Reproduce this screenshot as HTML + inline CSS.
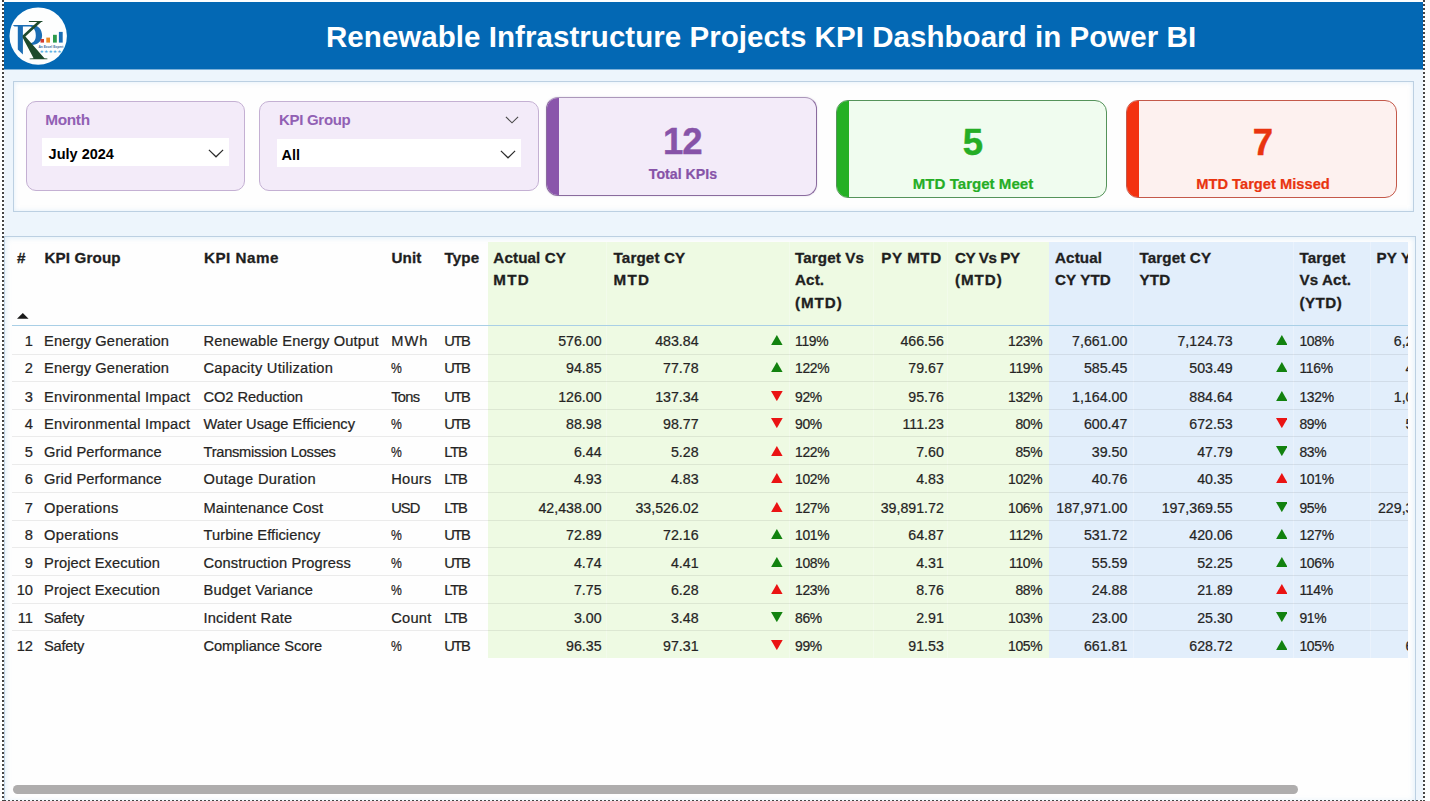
<!DOCTYPE html>
<html lang="en">
<head>
<meta charset="utf-8">
<title>Renewable Infrastructure Projects KPI Dashboard in Power BI</title>
<style>
*{box-sizing:border-box;margin:0;padding:0}
html,body{width:1430px;height:801px;overflow:hidden;background:#fdfefe}
body{position:relative;font-family:"Liberation Sans",Arial,sans-serif;color:#1c1b1a}
.abs{position:absolute}
#canvas{left:4px;top:2px;width:1419px;height:798px;background:#edf5fc}
#dotL{left:2px;top:0;width:2px;height:801px;background:repeating-linear-gradient(to bottom,#454545 0,#454545 2px,transparent 2px,transparent 4px)}
#dotR{left:1423px;top:0;width:2px;height:801px;background:repeating-linear-gradient(to bottom,#454545 0,#454545 2px,transparent 2px,transparent 4px)}
#dotB{z-index:5;left:4px;top:800px;width:1421px;height:2px;background:repeating-linear-gradient(to right,#454545 0,#454545 2px,transparent 2px,transparent 4px)}
#hdr{left:4px;top:2px;width:1419px;height:68px;background:#0368b4;border-bottom:1px solid #7db1d9}
#title{left:326px;top:19px;white-space:nowrap;font-weight:bold;font-size:29.5px;line-height:36px;color:#fff;letter-spacing:0.05px}
#logo{left:9px;top:7px}
#filters{left:13px;top:81px;width:1401px;height:131px;background:#fefefe;border:1px solid #bcd0e2;box-shadow:inset 0 0 5px rgba(170,210,240,.35)}
.slicer{background:#f3ebf9;border:1px solid #c4b0d3;border-radius:10px}
.slbl{font-weight:bold;color:#9160b4;white-space:nowrap}
.sbox{background:#fff}
.sval{font-weight:bold;color:#000;white-space:nowrap;font-size:14.5px;line-height:18px}
.card{border-radius:12px;overflow:hidden}
.card .bar{position:absolute;left:0;top:0;bottom:0;width:12px}
.card .num{position:absolute;left:0;right:0;text-align:center;font-weight:bold;white-space:nowrap;-webkit-text-stroke:.45px currentColor}
.card .lbl{position:absolute;left:0;right:0;text-align:center;font-weight:bold;white-space:nowrap;-webkit-text-stroke:.2px currentColor}
#tpanel{left:4px;top:236px;width:1412px;height:566px;background:#fefefe;border:1px solid #bcd0e2;border-bottom:none;box-shadow:inset 0 0 6px rgba(170,210,240,.45)}
#tclip{left:12px;top:238px;width:1396px;height:545px;overflow:hidden}
#tin{position:absolute;left:-12px;top:-238px;width:1430px;height:801px}
.band{position:absolute;top:242px;height:415.7px}
.vs{position:absolute;top:242px;height:415.7px;width:1px;background:rgba(255,255,255,.28)}
.hline{position:absolute;left:12px;width:1396px;top:325px;height:1px;background:#a9cfe6}
.rl{position:absolute;left:12px;width:1396px;height:1px;background:rgba(0,0,0,.075)}
.h{position:absolute;top:246.5px;font-weight:bold;font-size:15.2px;line-height:22.5px;white-space:nowrap;color:#1f1f1f;letter-spacing:.12px;-webkit-text-stroke:.3px #1f1f1f}
.row{position:absolute;left:0;width:1430px;height:27.64px}
.c{position:absolute;top:0;white-space:nowrap;font-size:14.67px;line-height:27.64px;color:#252423;-webkit-text-stroke:.22px #252423}
.c.n{font-size:14.2px}
.c.p{font-size:13.9px;letter-spacing:-.3px}
.c.r{text-align:right}
.c.pc{transform:scaleX(.83);transform-origin:0 50%}
.tri{position:absolute;top:7.3px}
.tri.d{top:7px}
#sbar{left:13px;top:785px;width:1284.5px;height:9px;border-radius:4.5px;background:#afadad}
</style>
</head>
<body>
<div id="canvas" class="abs"></div>
<div id="dotL" class="abs"></div>
<div id="dotR" class="abs"></div>
<div id="dotB" class="abs"></div>

<div id="hdr" class="abs"></div>
<svg id="logo" class="abs" width="60" height="60" viewBox="0 0 60 60">
  <circle cx="29.2" cy="29.1" r="28.7" fill="#fdfefe"/>
  <!-- P (blue) -->
  <path d="M3.7 18.3 L6 18 L22.4 18 C29.6 18 33.1 22.6 33.1 28.6 C33.1 34.4 28.6 37.9 22.6 37.9 L20.6 37.7 L20.6 36 C24.4 36.2 26.8 33.2 26.8 28.4 C26.8 23.4 24.6 19.9 20.8 19.6 L13.9 19.6 L13.9 47.4 L8.8 42.6 L8.8 19.6 L5.6 19.4 Z" fill="#1a6db4"/>
  <!-- K (dark green) -->
  <path d="M19.9 14.1 L33.4 14.1 L33.4 15 L32.2 15.1 L16.4 29.6 L35.4 51.3 L38.4 51.5 L38.4 52.2 L20.7 52.2 L20.7 51.5 L24.6 51.3 L13.6 30.6 L13.6 28.6 L28.2 15.1 L19.9 15 Z" fill="#1d4a2c"/>
  <rect x="31.5" y="32" width="3.5" height="3.6" fill="#d43a2e"/>
  <rect x="37.3" y="30.6" width="3.7" height="5" fill="#ec8a22"/>
  <rect x="44" y="27.8" width="3.8" height="7.8" fill="#2c9a4b"/>
  <rect x="49.9" y="24.9" width="3.8" height="10.7" fill="#1a6db4"/>
  <text x="29.4" y="41.2" font-family="Liberation Sans, Arial, sans-serif" font-size="3.4" font-weight="bold" fill="#3a6c9c" textLength="25" lengthAdjust="spacingAndGlyphs">An Excel Expert</text>
  <text x="30.6" y="45.8" font-family="DejaVu Sans, sans-serif" font-size="4.4" fill="#5aaee2" textLength="22" lengthAdjust="spacingAndGlyphs">★★★★★</text>
</svg>
<div id="title" class="abs">Renewable Infrastructure Projects KPI Dashboard in Power BI</div>

<div id="filters" class="abs"></div>

<!-- Month slicer -->
<div class="abs slicer" style="left:26px;top:100.5px;width:219px;height:90.5px"></div>
<div class="abs slbl" style="left:45.3px;top:111px;font-size:15.4px;line-height:18px;letter-spacing:-.35px">Month</div>
<div class="abs sbox" style="left:42px;top:138px;width:187px;height:28px"></div>
<div class="abs sval" style="left:48.6px;top:144.6px">July 2024</div>
<svg class="abs" style="left:208px;top:149.3px" width="16" height="9" viewBox="0 0 16 9"><polyline points="0.9,0.9 8,7.8 15.1,0.9" fill="none" stroke="#2b2b2b" stroke-width="1.2"/></svg>

<!-- KPI Group slicer -->
<div class="abs slicer" style="left:259px;top:100.5px;width:279.5px;height:90.5px"></div>
<div class="abs slbl" style="left:279px;top:110.5px;font-size:15px;line-height:18px;letter-spacing:-.3px">KPI Group</div>
<svg class="abs" style="left:505px;top:116px" width="14" height="8" viewBox="0 0 14 8"><polyline points="0.9,0.9 7,6.8 13.1,0.9" fill="none" stroke="#4a4a4a" stroke-width="1.1"/></svg>
<div class="abs sbox" style="left:276.5px;top:139px;width:244.8px;height:28px"></div>
<div class="abs sval" style="left:281.6px;top:145.6px">All</div>
<svg class="abs" style="left:500px;top:150.2px" width="16" height="9" viewBox="0 0 16 9"><polyline points="0.9,0.9 8,7.8 15.1,0.9" fill="none" stroke="#2b2b2b" stroke-width="1.2"/></svg>

<!-- Cards -->
<div class="abs card" style="left:546px;top:97px;width:271px;height:98.5px;background:#f3ebf9;border:1px solid #8a6b9e;border-top-color:#ab97ba;box-shadow:0 0 2px rgba(120,90,150,.25)">
  <div class="bar" style="background:#8a55ab"></div>
  <div class="num" style="top:24.1px;font-size:36.5px;line-height:40px;color:#8753a8;left:1.6px;letter-spacing:-1px">12</div>
  <div class="lbl" style="top:66.5px;font-size:14.2px;line-height:18px;color:#8753a8;left:3px">Total KPIs</div>
</div>
<div class="abs card" style="left:836px;top:100px;width:271px;height:97.5px;background:#f0fcef;border:1px solid #55935a">
  <div class="bar" style="background:#25b025"></div>
  <div class="num" style="top:22.1px;font-size:36.5px;line-height:40px;color:#25ad25;left:3px">5</div>
  <div class="lbl" style="top:73.5px;font-size:15.1px;line-height:18px;color:#25ad25;left:3px">MTD Target Meet</div>
</div>
<div class="abs card" style="left:1126px;top:100px;width:271px;height:97.5px;background:#fdf1ef;border:1px solid #c4594a">
  <div class="bar" style="background:#f33210"></div>
  <div class="num" style="top:22.1px;font-size:36.5px;line-height:40px;color:#e9340f;left:3px">7</div>
  <div class="lbl" style="top:73.5px;font-size:14.7px;line-height:18px;color:#e9340f;left:3px">MTD Target Missed</div>
</div>

<!-- Table -->
<div id="tpanel" class="abs"></div>
<div id="tclip" class="abs"><div id="tin">
  <div class="band" style="left:488px;width:561px;background:#eefae3"></div>
  <div class="band" style="left:1049px;width:360px;background:#e2eefb"></div>

  <div class="vs" style="left:606px"></div><div class="vs" style="left:789px"></div><div class="vs" style="left:873px"></div><div class="vs" style="left:947px"></div><div class="vs" style="left:1133px"></div><div class="vs" style="left:1293px"></div><div class="vs" style="left:1370px"></div>
  <div class="h" style="left:17px">#</div>
  <div class="h" style="left:44.5px">KPI Group</div>
  <div class="h" style="left:204px;letter-spacing:.5px">KPI Name</div>
  <div class="h" style="left:391.5px">Unit</div>
  <div class="h" style="left:444.5px">Type</div>
  <div class="h" style="left:493.3px">Actual CY<br><span style="letter-spacing:1.2px">MTD</span></div>
  <div class="h" style="left:613.6px">Target CY<br><span style="letter-spacing:1.2px">MTD</span></div>
  <div class="h" style="left:795px">Target Vs<br>Act.<br><span style="letter-spacing:.95px">(MTD)</span></div>
  <div class="h" style="left:881.3px;letter-spacing:.55px">PY MTD</div>
  <div class="h" style="left:955px"><span style="letter-spacing:-.42px">CY Vs PY</span><br><span style="letter-spacing:.95px">(MTD)</span></div>
  <div class="h" style="left:1055px">Actual<br>CY YTD</div>
  <div class="h" style="left:1139.5px">Target CY<br>YTD</div>
  <div class="h" style="left:1299.4px">Target<br>Vs Act.<br><span style="letter-spacing:.5px">(YTD)</span></div>
  <div class="h" style="left:1376.6px">PY YTD</div>
  <svg class="abs" style="left:17.2px;top:313.4px" width="11.6" height="5.8" viewBox="0 0 11.6 5.8"><polygon points="0,5.8 5.8,0 11.6,5.8" fill="#1a1a1a"/></svg>

  <div class="hline"></div>
<div class="row" style="top:328.00px"><span class="c r" style="right:1397px">1</span><span class="c" style="left:44px;letter-spacing:0.12px">Energy Generation</span><span class="c" style="left:203.5px;letter-spacing:0.14px">Renewable Energy Output</span><span class="c" style="left:391.2px;letter-spacing:1.0px">MWh</span><span class="c" style="left:444.3px;letter-spacing:-1.4px">UTB</span><span class="c r n" style="right:828.4px">576.00</span><span class="c r n" style="right:731.4px">483.84</span><svg class="tri" style="left:771.15px" width="11.7" height="10.2" viewBox="0 0 11.7 10.2"><polygon points="0,10.2 5.85,0 11.7,10.2" fill="#12820f"/></svg><span class="c n p" style="left:795px">119%</span><span class="c r n" style="right:486.20000000000005px">466.56</span><span class="c r n p" style="right:387.70000000000005px">123%</span><span class="c r n" style="right:302.70000000000005px">7,661.00</span><span class="c r n" style="right:197.29999999999995px">7,124.73</span><svg class="tri" style="left:1275.55px" width="11.7" height="10.2" viewBox="0 0 11.7 10.2"><polygon points="0,10.2 5.85,0 11.7,10.2" fill="#12820f"/></svg><span class="c n p" style="left:1299.4px">108%</span><span class="c r n" style="right:-19px">6,228.46</span></div>
<div class="row" style="top:355.00px"><span class="c r" style="right:1397px">2</span><span class="c" style="left:44px;letter-spacing:0.12px">Energy Generation</span><span class="c" style="left:203.5px;letter-spacing:0.25px">Capacity Utilization</span><span class="c pc" style="left:391.2px">%</span><span class="c" style="left:444.3px;letter-spacing:-1.4px">UTB</span><span class="c r n" style="right:828.4px">94.85</span><span class="c r n" style="right:731.4px">77.78</span><svg class="tri" style="left:771.15px" width="11.7" height="10.2" viewBox="0 0 11.7 10.2"><polygon points="0,10.2 5.85,0 11.7,10.2" fill="#12820f"/></svg><span class="c n p" style="left:795px">122%</span><span class="c r n" style="right:486.20000000000005px">79.67</span><span class="c r n p" style="right:387.70000000000005px">119%</span><span class="c r n" style="right:302.70000000000005px">585.45</span><span class="c r n" style="right:197.29999999999995px">503.49</span><svg class="tri" style="left:1275.55px" width="11.7" height="10.2" viewBox="0 0 11.7 10.2"><polygon points="0,10.2 5.85,0 11.7,10.2" fill="#12820f"/></svg><span class="c n p" style="left:1299.4px">116%</span><span class="c r n" style="right:-19px">491.97</span></div>
<div class="row" style="top:384.00px"><span class="c r" style="right:1397px">3</span><span class="c" style="left:44px;letter-spacing:0.23px">Environmental Impact</span><span class="c" style="left:203.5px;letter-spacing:-0.06px">CO2 Reduction</span><span class="c" style="left:391.2px;letter-spacing:-0.7px">Tons</span><span class="c" style="left:444.3px;letter-spacing:-1.4px">UTB</span><span class="c r n" style="right:828.4px">126.00</span><span class="c r n" style="right:731.4px">137.34</span><svg class="tri d" style="left:771.15px" width="11.7" height="10.2" viewBox="0 0 11.7 10.2"><polygon points="0,0 11.7,0 5.85,10.2" fill="#ea1313"/></svg><span class="c n p" style="left:795px">92%</span><span class="c r n" style="right:486.20000000000005px">95.76</span><span class="c r n p" style="right:387.70000000000005px">132%</span><span class="c r n" style="right:302.70000000000005px">1,164.00</span><span class="c r n" style="right:197.29999999999995px">884.64</span><svg class="tri" style="left:1275.55px" width="11.7" height="10.2" viewBox="0 0 11.7 10.2"><polygon points="0,10.2 5.85,0 11.7,10.2" fill="#12820f"/></svg><span class="c n p" style="left:1299.4px">132%</span><span class="c r n" style="right:-19px">1,024.32</span></div>
<div class="row" style="top:411.00px"><span class="c r" style="right:1397px">4</span><span class="c" style="left:44px;letter-spacing:0.23px">Environmental Impact</span><span class="c" style="left:203.5px">Water Usage Efficiency</span><span class="c pc" style="left:391.2px">%</span><span class="c" style="left:444.3px;letter-spacing:-1.4px">UTB</span><span class="c r n" style="right:828.4px">88.98</span><span class="c r n" style="right:731.4px">98.77</span><svg class="tri d" style="left:771.15px" width="11.7" height="10.2" viewBox="0 0 11.7 10.2"><polygon points="0,0 11.7,0 5.85,10.2" fill="#ea1313"/></svg><span class="c n p" style="left:795px">90%</span><span class="c r n" style="right:486.20000000000005px">111.23</span><span class="c r n p" style="right:387.70000000000005px">80%</span><span class="c r n" style="right:302.70000000000005px">600.47</span><span class="c r n" style="right:197.29999999999995px">672.53</span><svg class="tri d" style="left:1275.55px" width="11.7" height="10.2" viewBox="0 0 11.7 10.2"><polygon points="0,0 11.7,0 5.85,10.2" fill="#ea1313"/></svg><span class="c n p" style="left:1299.4px">89%</span><span class="c r n" style="right:-19px">582.46</span></div>
<div class="row" style="top:439.00px"><span class="c r" style="right:1397px">5</span><span class="c" style="left:44px;letter-spacing:0.13px">Grid Performance</span><span class="c" style="left:203.5px;letter-spacing:-0.26px">Transmission Losses</span><span class="c pc" style="left:391.2px">%</span><span class="c" style="left:444.3px;letter-spacing:-1.2px">LTB</span><span class="c r n" style="right:828.4px">6.44</span><span class="c r n" style="right:731.4px">5.28</span><svg class="tri" style="left:771.15px" width="11.7" height="10.2" viewBox="0 0 11.7 10.2"><polygon points="0,10.2 5.85,0 11.7,10.2" fill="#ea1313"/></svg><span class="c n p" style="left:795px">122%</span><span class="c r n" style="right:486.20000000000005px">7.60</span><span class="c r n p" style="right:387.70000000000005px">85%</span><span class="c r n" style="right:302.70000000000005px">39.50</span><span class="c r n" style="right:197.29999999999995px">47.79</span><svg class="tri d" style="left:1275.55px" width="11.7" height="10.2" viewBox="0 0 11.7 10.2"><polygon points="0,0 11.7,0 5.85,10.2" fill="#12820f"/></svg><span class="c n p" style="left:1299.4px">83%</span><span class="c r n" style="right:-19px">41.48</span></div>
<div class="row" style="top:466.00px"><span class="c r" style="right:1397px">6</span><span class="c" style="left:44px;letter-spacing:0.13px">Grid Performance</span><span class="c" style="left:203.5px;letter-spacing:0.33px">Outage Duration</span><span class="c" style="left:391.2px;letter-spacing:0.25px">Hours</span><span class="c" style="left:444.3px;letter-spacing:-1.2px">LTB</span><span class="c r n" style="right:828.4px">4.93</span><span class="c r n" style="right:731.4px">4.83</span><svg class="tri" style="left:771.15px" width="11.7" height="10.2" viewBox="0 0 11.7 10.2"><polygon points="0,10.2 5.85,0 11.7,10.2" fill="#ea1313"/></svg><span class="c n p" style="left:795px">102%</span><span class="c r n" style="right:486.20000000000005px">4.83</span><span class="c r n p" style="right:387.70000000000005px">102%</span><span class="c r n" style="right:302.70000000000005px">40.76</span><span class="c r n" style="right:197.29999999999995px">40.35</span><svg class="tri" style="left:1275.55px" width="11.7" height="10.2" viewBox="0 0 11.7 10.2"><polygon points="0,10.2 5.85,0 11.7,10.2" fill="#ea1313"/></svg><span class="c n p" style="left:1299.4px">101%</span><span class="c r n" style="right:-19px">42.39</span></div>
<div class="row" style="top:495.00px"><span class="c r" style="right:1397px">7</span><span class="c" style="left:44px;letter-spacing:0.29px">Operations</span><span class="c" style="left:203.5px;letter-spacing:0.09px">Maintenance Cost</span><span class="c" style="left:391.2px;letter-spacing:-0.9px">USD</span><span class="c" style="left:444.3px;letter-spacing:-1.2px">LTB</span><span class="c r n" style="right:828.4px">42,438.00</span><span class="c r n" style="right:731.4px">33,526.02</span><svg class="tri" style="left:771.15px" width="11.7" height="10.2" viewBox="0 0 11.7 10.2"><polygon points="0,10.2 5.85,0 11.7,10.2" fill="#ea1313"/></svg><span class="c n p" style="left:795px">127%</span><span class="c r n" style="right:486.20000000000005px">39,891.72</span><span class="c r n p" style="right:387.70000000000005px">106%</span><span class="c r n" style="right:302.70000000000005px">187,971.00</span><span class="c r n" style="right:197.29999999999995px">197,369.55</span><svg class="tri d" style="left:1275.55px" width="11.7" height="10.2" viewBox="0 0 11.7 10.2"><polygon points="0,0 11.7,0 5.85,10.2" fill="#12820f"/></svg><span class="c n p" style="left:1299.4px">95%</span><span class="c r n" style="right:-19px">229,372.56</span></div>
<div class="row" style="top:522.00px"><span class="c r" style="right:1397px">8</span><span class="c" style="left:44px;letter-spacing:0.29px">Operations</span><span class="c" style="left:203.5px;letter-spacing:0.07px">Turbine Efficiency</span><span class="c pc" style="left:391.2px">%</span><span class="c" style="left:444.3px;letter-spacing:-1.4px">UTB</span><span class="c r n" style="right:828.4px">72.89</span><span class="c r n" style="right:731.4px">72.16</span><svg class="tri" style="left:771.15px" width="11.7" height="10.2" viewBox="0 0 11.7 10.2"><polygon points="0,10.2 5.85,0 11.7,10.2" fill="#12820f"/></svg><span class="c n p" style="left:795px">101%</span><span class="c r n" style="right:486.20000000000005px">64.87</span><span class="c r n p" style="right:387.70000000000005px">112%</span><span class="c r n" style="right:302.70000000000005px">531.72</span><span class="c r n" style="right:197.29999999999995px">420.06</span><svg class="tri" style="left:1275.55px" width="11.7" height="10.2" viewBox="0 0 11.7 10.2"><polygon points="0,10.2 5.85,0 11.7,10.2" fill="#12820f"/></svg><span class="c n p" style="left:1299.4px">127%</span><span class="c r n" style="right:-19px">47.51</span></div>
<div class="row" style="top:550.00px"><span class="c r" style="right:1397px">9</span><span class="c" style="left:44px;letter-spacing:0.12px">Project Execution</span><span class="c" style="left:203.5px;letter-spacing:0.12px">Construction Progress</span><span class="c pc" style="left:391.2px">%</span><span class="c" style="left:444.3px;letter-spacing:-1.4px">UTB</span><span class="c r n" style="right:828.4px">4.74</span><span class="c r n" style="right:731.4px">4.41</span><svg class="tri" style="left:771.15px" width="11.7" height="10.2" viewBox="0 0 11.7 10.2"><polygon points="0,10.2 5.85,0 11.7,10.2" fill="#12820f"/></svg><span class="c n p" style="left:795px">108%</span><span class="c r n" style="right:486.20000000000005px">4.31</span><span class="c r n p" style="right:387.70000000000005px">110%</span><span class="c r n" style="right:302.70000000000005px">55.59</span><span class="c r n" style="right:197.29999999999995px">52.25</span><svg class="tri" style="left:1275.55px" width="11.7" height="10.2" viewBox="0 0 11.7 10.2"><polygon points="0,10.2 5.85,0 11.7,10.2" fill="#12820f"/></svg><span class="c n p" style="left:1299.4px">106%</span><span class="c r n" style="right:-19px">51.33</span></div>
<div class="row" style="top:577.00px"><span class="c r" style="right:1397px">10</span><span class="c" style="left:44px;letter-spacing:0.12px">Project Execution</span><span class="c" style="left:203.5px;letter-spacing:0.16px">Budget Variance</span><span class="c pc" style="left:391.2px">%</span><span class="c" style="left:444.3px;letter-spacing:-1.2px">LTB</span><span class="c r n" style="right:828.4px">7.75</span><span class="c r n" style="right:731.4px">6.28</span><svg class="tri" style="left:771.15px" width="11.7" height="10.2" viewBox="0 0 11.7 10.2"><polygon points="0,10.2 5.85,0 11.7,10.2" fill="#ea1313"/></svg><span class="c n p" style="left:795px">123%</span><span class="c r n" style="right:486.20000000000005px">8.76</span><span class="c r n p" style="right:387.70000000000005px">88%</span><span class="c r n" style="right:302.70000000000005px">24.88</span><span class="c r n" style="right:197.29999999999995px">21.89</span><svg class="tri" style="left:1275.55px" width="11.7" height="10.2" viewBox="0 0 11.7 10.2"><polygon points="0,10.2 5.85,0 11.7,10.2" fill="#ea1313"/></svg><span class="c n p" style="left:1299.4px">114%</span><span class="c r n" style="right:-19px">26.93</span></div>
<div class="row" style="top:605.00px"><span class="c r" style="right:1397px">11</span><span class="c" style="left:44px;letter-spacing:-0.24px">Safety</span><span class="c" style="left:203.5px;letter-spacing:0.19px">Incident Rate</span><span class="c" style="left:391.2px;letter-spacing:0.25px">Count</span><span class="c" style="left:444.3px;letter-spacing:-1.2px">LTB</span><span class="c r n" style="right:828.4px">3.00</span><span class="c r n" style="right:731.4px">3.48</span><svg class="tri d" style="left:771.15px" width="11.7" height="10.2" viewBox="0 0 11.7 10.2"><polygon points="0,0 11.7,0 5.85,10.2" fill="#12820f"/></svg><span class="c n p" style="left:795px">86%</span><span class="c r n" style="right:486.20000000000005px">2.91</span><span class="c r n p" style="right:387.70000000000005px">103%</span><span class="c r n" style="right:302.70000000000005px">23.00</span><span class="c r n" style="right:197.29999999999995px">25.30</span><svg class="tri d" style="left:1275.55px" width="11.7" height="10.2" viewBox="0 0 11.7 10.2"><polygon points="0,0 11.7,0 5.85,10.2" fill="#12820f"/></svg><span class="c n p" style="left:1299.4px">91%</span><span class="c r n" style="right:-19px">22.17</span></div>
<div class="row" style="top:633.00px"><span class="c r" style="right:1397px">12</span><span class="c" style="left:44px;letter-spacing:-0.24px">Safety</span><span class="c" style="left:203.5px;letter-spacing:-0.07px">Compliance Score</span><span class="c pc" style="left:391.2px">%</span><span class="c" style="left:444.3px;letter-spacing:-1.4px">UTB</span><span class="c r n" style="right:828.4px">96.35</span><span class="c r n" style="right:731.4px">97.31</span><svg class="tri d" style="left:771.15px" width="11.7" height="10.2" viewBox="0 0 11.7 10.2"><polygon points="0,0 11.7,0 5.85,10.2" fill="#ea1313"/></svg><span class="c n p" style="left:795px">99%</span><span class="c r n" style="right:486.20000000000005px">91.53</span><span class="c r n p" style="right:387.70000000000005px">105%</span><span class="c r n" style="right:302.70000000000005px">661.81</span><span class="c r n" style="right:197.29999999999995px">628.72</span><svg class="tri" style="left:1275.55px" width="11.7" height="10.2" viewBox="0 0 11.7 10.2"><polygon points="0,10.2 5.85,0 11.7,10.2" fill="#12820f"/></svg><span class="c n p" style="left:1299.4px">105%</span><span class="c r n" style="right:-19px">618.52</span></div>
<div class="rl" style="top:354px"></div>
<div class="rl" style="top:381px"></div>
<div class="rl" style="top:409px"></div>
<div class="rl" style="top:436px"></div>
<div class="rl" style="top:464px"></div>
<div class="rl" style="top:492px"></div>
<div class="rl" style="top:520px"></div>
<div class="rl" style="top:547px"></div>
<div class="rl" style="top:575px"></div>
<div class="rl" style="top:603px"></div>
<div class="rl" style="top:630px"></div>
</div></div>
<div id="sbar" class="abs"></div>
</body>
</html>
